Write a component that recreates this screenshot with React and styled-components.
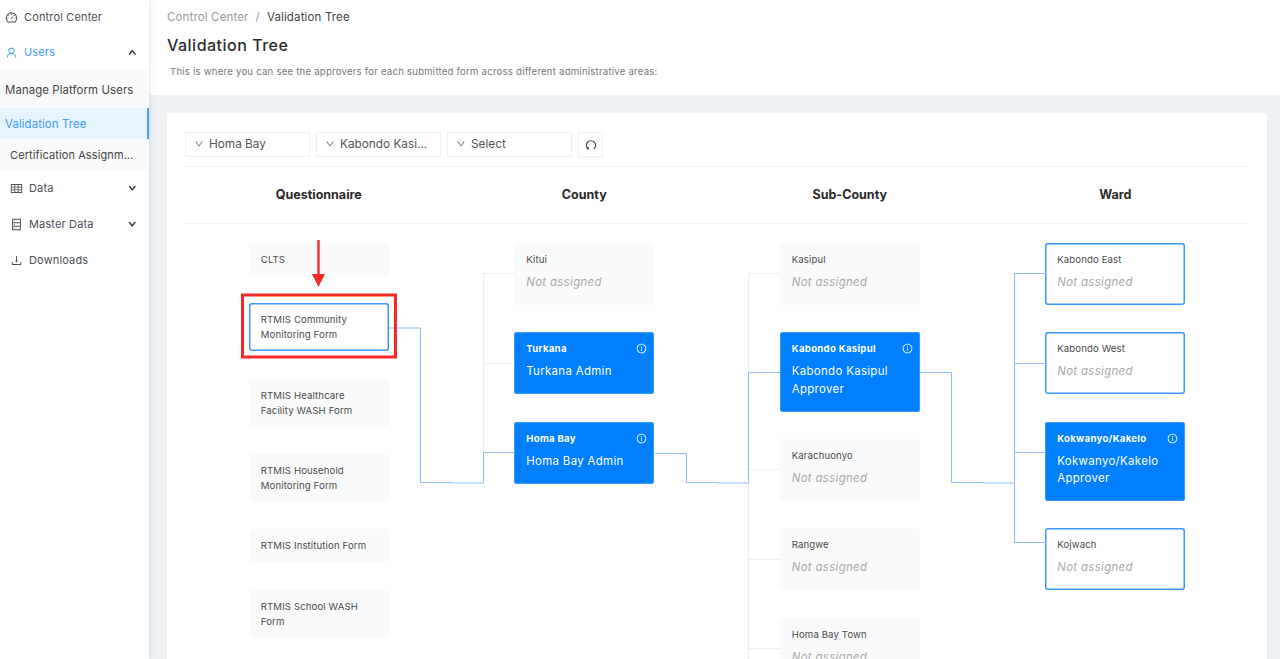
import React from 'react'
import styled, { createGlobalStyle } from 'styled-components'
import {
  AiOutlineDashboard,
  AiOutlineUser,
  AiOutlineTable,
  AiOutlineDatabase,
  AiOutlineDownload,
  AiOutlineInfoCircle,
  AiOutlineDown,
  AiOutlineUp,
} from 'react-icons/ai'

const GlobalStyle = createGlobalStyle`
  html, body {
    margin: 0;
    padding: 0;
    height: 100%;
    overflow: hidden;
    font-family: Inter, "Open Sans", sans-serif;
    background: #eef1f4;
  }
  * { box-sizing: border-box; }
`

const Page = styled.div`
  display: flex;
  width: 1280px;
  height: 659px;
  overflow: hidden;
`

const Sidebar = styled.aside`
  width: 149px;
  flex: none;
  background: #fff;
  box-shadow: 1px 0 5px rgba(0, 0, 0, 0.1);
  position: relative;
  z-index: 2;
`

const MenuItem = styled.div`
  display: flex;
  align-items: center;
  height: ${props => props.height || 36}px;
  padding-left: ${props => props.indent || 5}px;
  padding-right: 13px;
  gap: 6px;
  font-size: 11px;
  letter-spacing: 0.15px;
  color: ${props => (props.active ? '#3f9bf5' : '#4a4f57')};
  svg { flex: none; font-size: 13px; }
`

const MenuArrow = styled.span`
  margin-left: auto;
  display: flex;
  color: #333;
  svg { font-size: 8.5px; stroke: currentColor; stroke-width: 110; }
`

const SubMenu = styled.div`
  background: #fafafa;
  padding-top: 2px;
`

const SubItem = styled.div`
  height: ${props => props.height}px;
  display: flex;
  align-items: center;
  padding-left: ${props => props.indent || 5}px;
  padding-right: 12px;
  font-size: 11.4px;
  letter-spacing: 0.1px;
  color: ${props => (props.selected ? '#3f9bf5' : '#444')};
  background: ${props => (props.selected ? '#e6f4ff' : 'transparent')};
  border-right: ${props => (props.selected ? '2px solid #4a9ff5' : 'none')};
  span {
    overflow: hidden;
    white-space: nowrap;
    text-overflow: ellipsis;
  }
`

const ManageItem = styled(SubItem)`
  padding-right: 0;
`

const CertItem = styled(SubItem)`
  font-size: 11px;
`

const Main = styled.main`
  flex: 1;
  min-width: 0;
  display: flex;
  flex-direction: column;
`

const Header = styled.header`
  height: 95px;
  flex: none;
  background: #fff;
  padding: 9px 18px 0;
`

const Breadcrumb = styled.div`
  display: flex;
  gap: 7px;
  height: 16px;
  align-items: center;
  font-size: 11.5px;
  letter-spacing: 0.15px;
  color: #999;
  b { font-weight: 400; color: #444; }
`

const Title = styled.h1`
  margin: 10px 0 0;
  font-size: 16px;
  line-height: 20px;
  font-weight: 500;
  letter-spacing: 0.5px;
  color: #2c2c2c;
`

const Description = styled.p`
  margin: 10px 0 0 3px;
  font-size: 9.6px;
  line-height: 14px;
  letter-spacing: 0.22px;
  color: #777;
`

const Content = styled.div`
  flex: 1;
  padding: 18px 13px 0 18px;
  min-height: 0;
`

const Card = styled.section`
  background: #fff;
  height: 100%;
  padding: 19px 19px 0 18px;
`

const Filters = styled.div`
  display: flex;
  gap: 6px;
  padding-bottom: 9px;
  border-bottom: 1px solid #f2f3f4;
`

const Select = styled.div`
  width: 125px;
  height: 25px;
  display: flex;
  align-items: center;
  gap: 5px;
  padding: 0 8px 1px 8px;
  border: 1px solid #eef0f1;
  font-size: 11.8px;
  color: #555;
  svg { flex: none; font-size: 10px; }
  span {
    overflow: hidden;
    white-space: nowrap;
    text-overflow: ellipsis;
  }
`

const ReloadButton = styled.div`
  width: 25px;
  height: 25px;
  display: flex;
  align-items: center;
  justify-content: center;
  border: 1px solid #eef0f1;
  box-shadow: 0 1px 1px rgba(0, 0, 0, 0.03);
  color: #444;
`

const Columns = styled.div`
  display: grid;
  grid-template-columns: repeat(4, 1fr);
  border-bottom: 1px solid #f0f1f2;
  height: 57px;
  align-items: center;
  padding: 0 0 2px 1px;
`

const ColumnTitle = styled.div`
  text-align: center;
  font-size: 12.5px;
  font-weight: 700;
  color: #2a2a2a;
`

const Tree = styled.div`
  position: relative;
  display: grid;
  grid-template-columns: repeat(4, 1fr);
  padding: 19px 0 0 1px;
`

const TreeColumn = styled.div`
  display: flex;
  flex-direction: column;
  align-items: center;
  gap: 27.35px;
`

const Node = styled.div`
  width: 140px;
  flex: none;
  border-radius: 3px;
  padding: ${props => (props.compact ? '9px 12px' : '9px 6px 13.6px 12px')};
  background: ${props =>
    props.variant === 'filled' ? '#0080ff' : props.variant === 'open' ? '#fff' : '#f9fafb'};
  box-shadow: ${props =>
    props.variant === 'open'
      ? 'inset 0 0 0 1.5px #3a97fb'
      : props.variant === 'filled'
        ? 'inset 0 0 0 1px #3a97fb'
        : 'none'};
  color: ${props => (props.variant === 'filled' ? '#fff' : '#4a4a4a')};
`

const NodeHead = styled.div`
  display: flex;
  justify-content: space-between;
  align-items: center;
  min-height: 15px;
  font-size: 9.6px;
  line-height: 15px;
  letter-spacing: ${props => (props.strong ? '0.3px' : '0.12px')};
  font-weight: ${props => (props.strong ? 700 : 400)};
  svg { flex: none; font-size: 11px; margin-right: 1px; }
`

const NodeUser = styled.div`
  margin-top: 7px;
  font-size: 11.4px;
  line-height: 17.4px;
  letter-spacing: 0.35px;
  font-style: ${props => (props.missing ? 'italic' : 'normal')};
  color: ${props => (props.missing ? '#a8a8a8' : '#fff')};
`

const FormName = styled.div`
  font-size: 9.6px;
  line-height: 15px;
  letter-spacing: 0.12px;
`

const Overlay = styled.svg`
  position: absolute;
  left: 0;
  top: 0;
  width: 1063px;
  height: 436px;
  pointer-events: none;
  overflow: visible;
`

const forms = [
  { name: 'CLTS' },
  { name: 'RTMIS Community Monitoring Form', variant: 'open' },
  { name: 'RTMIS Healthcare Facility WASH Form' },
  { name: 'RTMIS Household Monitoring Form' },
  { name: 'RTMIS Institution Form' },
  { name: 'RTMIS School WASH Form' },
]

const counties = [
  { name: 'Kitui' },
  { name: 'Turkana', user: 'Turkana Admin', variant: 'filled' },
  { name: 'Homa Bay', user: 'Homa Bay Admin', variant: 'filled' },
]

const subCounties = [
  { name: 'Kasipul' },
  { name: 'Kabondo Kasipul', user: 'Kabondo Kasipul Approver', variant: 'filled' },
  { name: 'Karachuonyo' },
  { name: 'Rangwe' },
  { name: 'Homa Bay Town' },
]

const wards = [
  { name: 'Kabondo East', variant: 'open' },
  { name: 'Kabondo West', variant: 'open' },
  { name: 'Kokwanyo/Kakelo', user: 'Kokwanyo/Kakelo Approver', variant: 'filled' },
  { name: 'Kojwach', variant: 'open' },
]

const AreaNode = ({ name, user, variant }) => (
  <Node variant={variant}>
    <NodeHead strong={variant === 'filled'}>
      {name}
      {variant === 'filled' && <AiOutlineInfoCircle />}
    </NodeHead>
    <NodeUser missing={!user}>{user || 'Not assigned'}</NodeUser>
  </Node>
)

const ReloadIcon = () => (
  <svg width="12" height="12" viewBox="0 0 12 12" fill="none" stroke="currentColor" strokeWidth="1.1">
    <path d="M3.2 10 A4.6 4.6 0 1 1 8.8 10" />
    <path d="M1.6 8.6 L3.2 10 L3.4 8" />
  </svg>
)

// connectors and the red annotation, in page coordinates
const Connectors = () => (
  <Overlay viewBox="185 224 1063 436">
    <g fill="none" stroke="#dcdfe3" strokeWidth="1" strokeDasharray="1 1">
      <path d="M483.5 273.5V452M483.5 273.5H515M483.5 363.5H515" />
      <path d="M748.5 273.5V660M748.5 273.5H780M748.5 469.5H780M748.5 559.5H780M748.5 648.5H780" />
    </g>
    <g fill="none" stroke="#8fbcfd" strokeWidth="1">
      <path d="M389 328H420.5V482.5H452" />
      <path d="M452 483H483.5V452.5H515" />
      <path d="M655 453.5H686.5V482.5H717" />
      <path d="M717 483H748.5V372.5H780" />
      <path d="M920 372.5H951.5V482.5H983" />
      <path d="M983 483H1014.5" />
      <path d="M1014.5 273.5V542.5H1046M1014.5 273.5H1046M1014.5 363.5H1046M1014.5 452.5H1046" />
    </g>
    <rect x="242.5" y="295" width="153" height="62" fill="none" stroke="#f32a25" strokeWidth="3" />
    <path d="M318.5 240V276" stroke="#f32a25" strokeWidth="2.4" />
    <path d="M312 274H325L318.5 287Z" fill="#f32a25" />
  </Overlay>
)

export default function App() {
  return (
    <Page>
      <GlobalStyle />
      <Sidebar>
        <MenuItem height={34}>
          <AiOutlineDashboard />
          Control Center
        </MenuItem>
        <MenuItem active>
          <AiOutlineUser />
          Users
          <MenuArrow><AiOutlineUp /></MenuArrow>
        </MenuItem>
        <SubMenu>
          <ManageItem height={36}><span>Manage Platform Users</span></ManageItem>
          <SubItem height={31} selected><span>Validation Tree</span></SubItem>
          <CertItem height={31} indent={10}><span>Certification Assignments</span></CertItem>
        </SubMenu>
        <MenuItem indent={10}>
          <AiOutlineTable />
          Data
          <MenuArrow><AiOutlineDown /></MenuArrow>
        </MenuItem>
        <MenuItem indent={10}>
          <AiOutlineDatabase />
          Master Data
          <MenuArrow><AiOutlineDown /></MenuArrow>
        </MenuItem>
        <MenuItem indent={10}>
          <AiOutlineDownload />
          Downloads
        </MenuItem>
      </Sidebar>
      <Main>
        <Header>
          <Breadcrumb>
            Control Center <span>/</span> <b>Validation Tree</b>
          </Breadcrumb>
          <Title>Validation Tree</Title>
          <Description>
            This is where you can see the approvers for each submitted form across different administrative areas:
          </Description>
        </Header>
        <Content>
          <Card>
            <Filters>
              <Select><AiOutlineDown /><span>Homa Bay</span></Select>
              <Select><AiOutlineDown /><span>Kabondo Kasipul</span></Select>
              <Select><AiOutlineDown /><span>Select</span></Select>
              <ReloadButton><ReloadIcon /></ReloadButton>
            </Filters>
            <Columns>
              <ColumnTitle>Questionnaire</ColumnTitle>
              <ColumnTitle>County</ColumnTitle>
              <ColumnTitle>Sub-County</ColumnTitle>
              <ColumnTitle>Ward</ColumnTitle>
            </Columns>
            <Tree>
              <TreeColumn>
                {forms.map(form => (
                  <Node compact variant={form.variant} key={form.name}>
                    <FormName>{form.name}</FormName>
                  </Node>
                ))}
              </TreeColumn>
              <TreeColumn>
                {counties.map(item => <AreaNode key={item.name} {...item} />)}
              </TreeColumn>
              <TreeColumn>
                {subCounties.map(item => <AreaNode key={item.name} {...item} />)}
              </TreeColumn>
              <TreeColumn>
                {wards.map(item => <AreaNode key={item.name} {...item} />)}
              </TreeColumn>
              <Connectors />
            </Tree>
          </Card>
        </Content>
      </Main>
    </Page>
  )
}
